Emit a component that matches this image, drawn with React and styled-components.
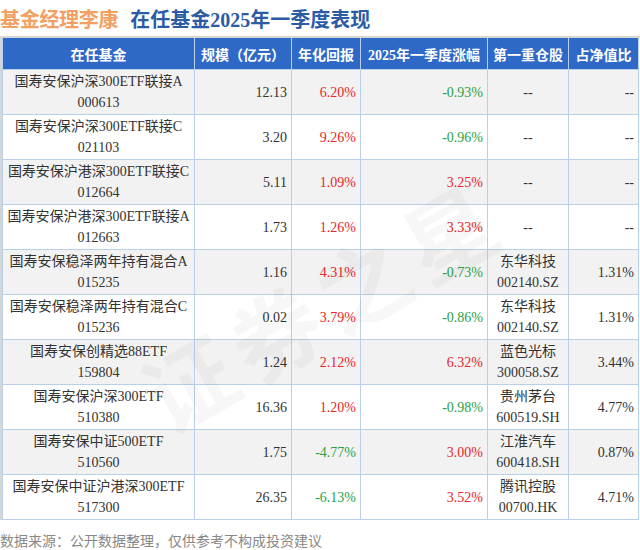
import React from "react";
import styled, { createGlobalStyle } from "styled-components";

const funds = [
  { name: "国寿安保沪深300ETF联接A", code: "000613", size: "12.13", ret: "6.20%", q1: "-0.93%", stock: null, ratio: "--" },
  { name: "国寿安保沪深300ETF联接C", code: "021103", size: "3.20", ret: "9.26%", q1: "-0.96%", stock: null, ratio: "--" },
  { name: "国寿安保沪港深300ETF联接C", code: "012664", size: "5.11", ret: "1.09%", q1: "3.25%", stock: null, ratio: "--" },
  { name: "国寿安保沪港深300ETF联接A", code: "012663", size: "1.73", ret: "1.26%", q1: "3.33%", stock: null, ratio: "--" },
  { name: "国寿安保稳泽两年持有混合A", code: "015235", size: "1.16", ret: "4.31%", q1: "-0.73%", stock: ["东华科技", "002140.SZ"], ratio: "1.31%" },
  { name: "国寿安保稳泽两年持有混合C", code: "015236", size: "0.02", ret: "3.79%", q1: "-0.86%", stock: ["东华科技", "002140.SZ"], ratio: "1.31%" },
  { name: "国寿安保创精选88ETF", code: "159804", size: "1.24", ret: "2.12%", q1: "6.32%", stock: ["蓝色光标", "300058.SZ"], ratio: "3.44%" },
  { name: "国寿安保沪深300ETF", code: "510380", size: "16.36", ret: "1.20%", q1: "-0.98%", stock: ["贵州茅台", "600519.SH"], ratio: "4.77%" },
  { name: "国寿安保中证500ETF", code: "510560", size: "1.75", ret: "-4.77%", q1: "3.00%", stock: ["江淮汽车", "600418.SH"], ratio: "0.87%" },
  { name: "国寿安保中证沪港深300ETF", code: "517300", size: "26.35", ret: "-6.13%", q1: "3.52%", stock: ["腾讯控股", "00700.HK"], ratio: "4.71%" },
];

const tone = (v) => (v.startsWith("-") ? "down" : "up");

export default function App() {
  return (
    <Page>
      <GlobalStyle />
      <Title>
        <Manager>基金经理李康</Manager>
        <Subject>在任基金2025年一季度表现</Subject>
      </Title>
      <Frame>
        <Table>
          <colgroup>
            <col style={{ width: 192 }} />
            <col style={{ width: 97 }} />
            <col style={{ width: 69 }} />
            <col style={{ width: 127 }} />
            <col style={{ width: 81 }} />
            <col style={{ width: 70 }} />
          </colgroup>
          <thead>
            <tr>
              <Th>在任基金</Th>
              <Th>规模（亿元）</Th>
              <Th>年化回报</Th>
              <Th>2025年一季度涨幅</Th>
              <Th>第一重仓股</Th>
              <Th>占净值比</Th>
            </tr>
          </thead>
          <tbody>
            {funds.map((f, i) => (
              <Row key={f.code} $shade={i % 2 === 0}>
                <Td $align="center">
                  {f.name}
                  <br />
                  {f.code}
                </Td>
                <Td $align="right">{f.size}</Td>
                <Td $align="right" $tone={tone(f.ret)}>{f.ret}</Td>
                <Td $align="right" $tone={tone(f.q1)}>{f.q1}</Td>
                <Td $align="center">
                  {f.stock ? (
                    <>
                      {f.stock[0]}
                      <br />
                      {f.stock[1]}
                    </>
                  ) : (
                    "--"
                  )}
                </Td>
                <Td $align="right">{f.ratio}</Td>
              </Row>
            ))}
          </tbody>
        </Table>
        <Watermark>证券之星</Watermark>
      </Frame>
      <Source>数据来源：公开数据整理，仅供参考不构成投资建议</Source>
    </Page>
  );
}

const GlobalStyle = createGlobalStyle`
  body {
    margin: 0;
    background: #fff;
  }
`;

const Page = styled.div`
  width: 640px;
  height: 550px;
  overflow: hidden;
  font-family: "Liberation Serif", "Noto Sans CJK SC", serif;
`;

const Title = styled.div`
  height: 36px;
  display: flex;
  align-items: center;
  gap: 12px;
  font-size: 20px;
  font-weight: bold;
  font-family: "Liberation Serif", "Noto Sans CJK SC", sans-serif;
`;

const Manager = styled.span`
  color: #f2a064;
  letter-spacing: -0.3px;
`;

const Subject = styled.span`
  color: #2c5ba5;
`;

const Frame = styled.div`
  position: relative;
  border-top: 2px solid #d6d6d6;
  border-left: 2px solid #d6d6d6;
  width: 638px;
  overflow: hidden;
`;

const Table = styled.table`
  border-collapse: collapse;
  table-layout: fixed;
  width: 637px;
  font-size: 14px;
  color: #333;
`;

const Th = styled.th`
  height: 31px;
  padding: 0;
  background: #2e69c8;
  color: #fff;
  font-weight: bold;
  font-size: 14px;
  text-align: center;
  border: 1px solid #b8d0ea;
  border-top: none;
  white-space: nowrap;
`;

const Row = styled.tr`
  background: ${(p) => (p.$shade ? "#f2f2f2" : "#fff")};
`;

const Td = styled.td`
  height: 44px;
  padding: 0 4px;
  line-height: 21px;
  border: 1px solid #b8d0ea;
  text-align: ${(p) => p.$align};
  white-space: nowrap;
  color: ${(p) => (p.$tone === "up" ? "#e8262a" : p.$tone === "down" ? "#2ba245" : "#333")};
`;

const Watermark = styled.div`
  position: absolute;
  left: 120px;
  top: 200px;
  pointer-events: none;
  font-size: 90px;
  font-weight: bold;
  font-family: "Noto Sans CJK SC", sans-serif;
  color: rgba(0, 0, 0, 0.03);
  transform: rotate(-30deg);
  white-space: nowrap;
  letter-spacing: 10px;
`;

const Source = styled.div`
  margin-top: 10px;
  font-size: 14px;
  color: #888;
  font-family: "Noto Sans CJK SC", sans-serif;
`;
